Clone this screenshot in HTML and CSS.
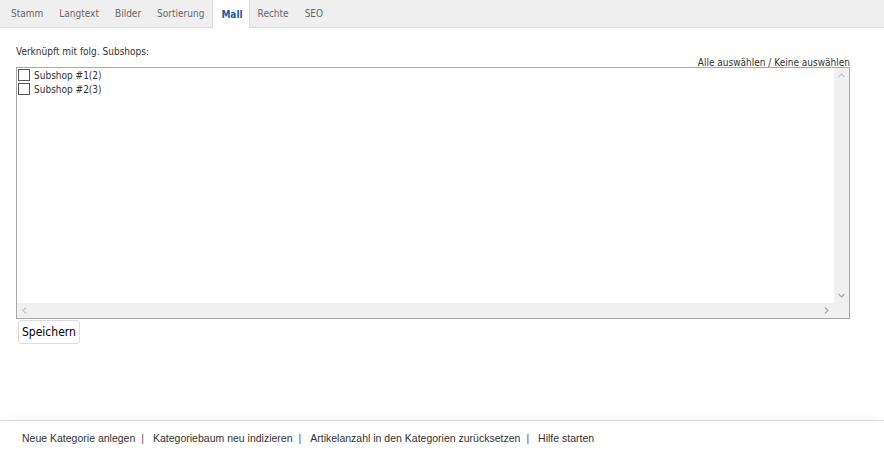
FILE: index.html
```html
<!DOCTYPE html>
<html lang="de">
<head>
  <meta charset="UTF-8">
  <title>Kategorie bearbeiten</title>
  <link rel="stylesheet" href="styles.css">
</head>
<body>
  <!-- Tab strip -->
  <div class="tabs">
    <span class="tab">Stamm</span>
    <span class="tab">Langtext</span>
    <span class="tab">Bilder</span>
    <span class="tab">Sortierung</span>
    <span class="tab active">Mall</span>
    <span class="tab">Rechte</span>
    <span class="tab">SEO</span>
  </div>

  <div class="content">
    <div class="label">Verknüpft mit folg. Subshops:</div>
    <div class="select-links">Alle auswählen / Keine auswählen</div>

    <!-- Subshop list with its scrollbars -->
    <div class="listbox">
      <div class="list-items">
        <label class="item"><span class="check"></span>Subshop #1(2)</label>
        <label class="item"><span class="check"></span>Subshop #2(3)</label>
      </div>
      <div class="vscroll">
        <svg width="15" height="15" viewBox="0 0 15 15"><path d="M4.5 9 L7.5 6 L10.5 9" fill="none" stroke="#c4c4c4" stroke-width="1.2"/></svg>
        <svg width="15" height="15" viewBox="0 0 15 15"><path d="M4.5 6 L7.5 9 L10.5 6" fill="none" stroke="#a8a8a8" stroke-width="1.2"/></svg>
      </div>
      <div class="hscroll">
        <svg width="15" height="15" viewBox="0 0 15 15"><path d="M9 4.5 L6 7.5 L9 10.5" fill="none" stroke="#c4c4c4" stroke-width="1.2"/></svg>
        <svg width="15" height="15" viewBox="0 0 15 15"><path d="M6 4.5 L9 7.5 L6 10.5" fill="none" stroke="#a8a8a8" stroke-width="1.2"/></svg>
      </div>
      <div class="corner"></div>
    </div>

    <button class="save">Speichern</button>
  </div>

  <!-- Footer actions -->
  <div class="footer">
    <span>Neue Kategorie anlegen</span><span class="sep">|</span>
    <span>Kategoriebaum neu indizieren</span><span class="sep">|</span>
    <span>Artikelanzahl in den Kategorien zurücksetzen</span><span class="sep">|</span>
    <span>Hilfe starten</span>
  </div>
</body>
</html>
```

FILE: styles.css
```css
body {
  margin: 0;
  width: 884px;
  height: 454px;
  display: flex;
  flex-direction: column;
  font-family: "DejaVu Sans Condensed", "DejaVu Sans", sans-serif;
  font-size: 10px;
  color: #333;
  background: #fff;
}

/* Tabs */
.tabs {
  display: flex;
  height: 27px;
  background: #efefef;
  border-bottom: 1px solid #dcdcdc;
  padding-left: 3px;
}

.tab {
  display: flex;
  align-items: center;
  padding: 0 7px;
  color: #666;
  border-left: 1px solid transparent;
  border-right: 1px solid transparent;
}

.tab.active {
  background: #fff;
  color: #20589a;
  font-weight: bold;
  border-color: #dcdcdc;
  height: 28px;
  padding: 0 6px 0 8px;
}

/* Main content */
.content {
  flex: 1;
  display: flex;
  flex-direction: column;
  padding: 18px 0 0 16px;
}

.label {
  color: #333;
  line-height: 12px;
}

.select-links {
  width: 834px;
  text-align: right;
  line-height: 12px;
  margin: -1px 0 -2px;
  color: #333;
}

.listbox {
  width: 832px;
  height: 250px;
  border: 1px solid #a8a8a8;
  display: grid;
  grid-template-columns: 1fr 15px;
  grid-template-rows: 1fr 15px;
}

.list-items {
  padding: 0 2px 0 1px;
}

.item {
  display: flex;
  align-items: center;
  height: 14px;
  color: #333;
}

.check {
  width: 10px;
  height: 10px;
  border: 1px solid #555;
  margin-right: 4px;
  background: #fff;
}

.vscroll, .hscroll {
  display: flex;
  justify-content: space-between;
  background: #f0f0f0;
}

.vscroll {
  flex-direction: column;
}

.corner {
  background: #f0f0f0;
}

.save {
  align-self: flex-start;
  margin: 1px 0 0 2px;
  height: 24px;
  padding: 0 3px;
  font-family: "DejaVu Sans Condensed", "DejaVu Sans", sans-serif;
  font-size: 12px;
  color: #000;
  background: #fff;
  border: 1px solid #dcdcdc;
  border-radius: 3px;
}

/* Footer */
.footer {
  height: 33px;
  border-top: 1px solid #dcdcdc;
  display: flex;
  align-items: center;
  padding-left: 22px;
  font-family: "Liberation Sans", Arial, sans-serif;
  font-size: 10.5px;
  color: #333;
  box-shadow: 0 -8px 10px -6px rgba(0, 0, 0, 0.04);
}

.sep {
  color: #6b4a7c;
  margin: 0 9px 0 6px;
}
```
